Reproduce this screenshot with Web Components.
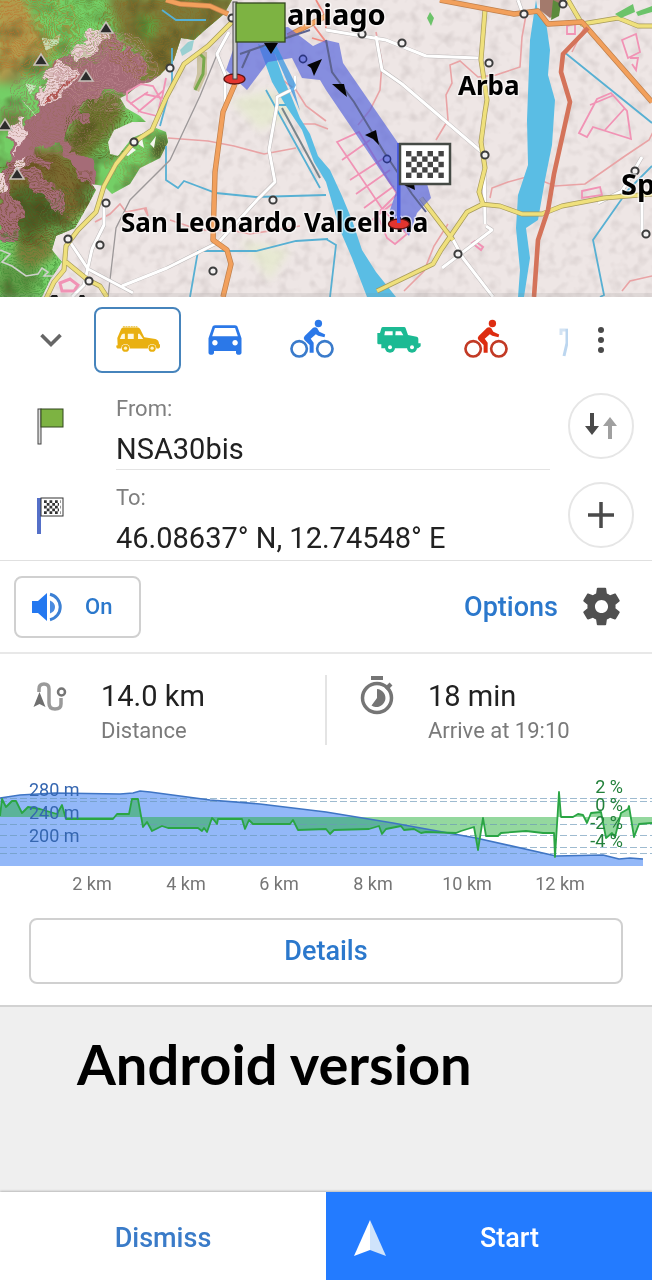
<!DOCTYPE html>
<html lang="en">
<head>
<meta charset="utf-8">
<meta name="viewport" content="width=device-width, initial-scale=1">
<title>Route details</title>
<style>
  body { margin: 0; background: #efefef; font-family: Roboto, sans-serif; color: #212121; }
</style>
</head>
<body>
<route-page></route-page>

<template id="map-view">
  <style>
    :host { display: block; overflow: hidden; background: #eee6e5; }
    svg { display: block; width: 100%; height: auto; }
    text { font: 700 26px "Noto Sans", sans-serif; fill: #000; stroke: #fff; stroke-opacity: .6; stroke-width: 3px; paint-order: stroke; stroke-linejoin: round; }
    .town { font-size: 29px; }
    filter { color-interpolation-filters: sRGB; }
  </style>
  <svg viewBox="0 0 652 297" role="img" aria-label="Map with the planned route">
    <defs>
      <filter id="rough" x="-5%" y="-5%" width="110%" height="110%">
        <feTurbulence type="fractalNoise" baseFrequency=".06" numOctaves="3" seed="4"/>
        <feDisplacementMap in="SourceGraphic" scale="22" xChannelSelector="R" yChannelSelector="G"/>
      </filter>
      <filter id="shade" x="0" y="0" width="100%" height="100%">
        <feTurbulence type="fractalNoise" baseFrequency=".04" numOctaves="3" seed="9"/>
        <feColorMatrix values="0 0 0 0 .25  0 0 0 0 .22  0 0 0 0 .08  3 0 0 0 -1.4"/>
      </filter>
      <filter id="grain" x="0" y="0" width="100%" height="100%">
        <feTurbulence type="fractalNoise" baseFrequency=".09" numOctaves="2" seed="2"/>
        <feColorMatrix values="0 0 0 0 .5  0 0 0 0 .45  0 0 0 0 .45  1.2 0 0 0 -.55"/>
      </filter>
      <filter id="soft"><feGaussianBlur stdDeviation="4"/></filter>
      <clipPath id="land"><path d="M0 0H232L224 14 205 30 194 40 181 38 174 60 160 75 150 82 140 84 128 94 120 98 126 108 140 116 146 122 132 122 114 130 108 142 110 154 118 156 132 138 156 128 166 132 168 142 160 158 140 168 130 184 112 194 104 186 92 184 86 176 96 190 88 205 75 228 56 236 52 250 62 262 50 280 42 297H0Z"/></clipPath>
    </defs>
    <rect width="652" height="297" fill="#eee6e5"/>
    <rect width="652" height="297" filter="url(#grain)" opacity=".35"/>
    <path d="M230 100l40-10 30 20-40 20zM240 240l50 10-20 30z" fill="#e2ebc6" opacity=".6" filter="url(#soft)"/>
    <g clip-path="url(#land)">
      <rect width="240" height="297" fill="#74cf66"/>
      <g filter="url(#soft)">
        <path d="M-5 -5H22L38 30 58 48 40 62 24 58 22 78 -5 84Z" fill="#b39a4c"/>
        <path d="M0 84L20 62 30 50 50 56 40 66 30 62 20 84Z" fill="#8a8d4a"/>
        <path d="M106 -5H240L232 20 192 40 170 78 140 84 146 56 122 44 116 24Z" fill="#7d7a38"/>
        <path d="M138 14L160 20 152 40 140 36Z" fill="#5da23f"/>
        <path d="M90 92H124L122 120 95 150 84 165 100 182 84 190 62 150 72 122Z" fill="#6d752f"/>
        <path d="M0 190L24 146 60 150 84 190 86 210 66 226 0 225Z" fill="#7a6a30"/>
        <path d="M10 190L50 180 64 220 30 240 4 226Z" fill="#4c6a2a"/>
        <path d="M0 110L30 112 14 132 0 130Z" fill="#66843c"/>
        <path d="M18 236L52 232 54 256 30 270 14 258Z" fill="#7d7c3a"/>
        <path d="M0 262L40 268 34 297H0Z" fill="#5f9a46"/>
        <path d="M150 150L168 130 170 145 152 166Z" fill="#566c34"/>
      </g>
      <rect width="240" height="297" filter="url(#shade)" opacity=".42"/>
      <g filter="url(#rough)">
        <path d="M106 30L118 36 122 48 136 52 148 60 144 76 154 82 128 94 98 96 84 106 86 124 72 126 62 138 76 152 92 172 96 190 84 182 72 160 56 144 34 152 54 164 48 168 26 162 44 176 62 196 66 216 40 196 26 178 10 180 18 210 24 228 12 242 0 240 0 190 10 156 8 140 24 124 36 112 34 102 50 82 52 64 78 50 94 40 98 28Z" fill="#a56c77"/>
        <path d="M96 26l14 8-8 14-22 8-4-8zM56 62l22 6-4 14-30 26-8-4zM8 126l14-8 2 20-10 14-4-14zM14 160l14-8 2 10-16 14zM0 176l8 0-2 16-6 4z" fill="#ecd3d6"/>
        <path d="M72 78L44 104" stroke="#b5504e" stroke-width="2"/>
      </g>
      <path d="M42 38l10 2 8-6-2 10-12 6zM26 84l10 2-6 8zM22 100l14 16" fill="#d9f0d2" stroke="#d9f0d2" opacity=".75"/>
      <g id="contours" filter="url(#rough)" fill="none" stroke-width="1"></g>
      <path d="M122 154l8-8 6 4-8 6zM138 144l4-6 2 10zM150 144l6-8-2 12z" fill="#f4f6ee"/>
      <path d="M0 250l10 4-8 8 10 4 14 10 12-2 4-6 6 4-4 4 14 0" fill="none" stroke="#d0d0cc" stroke-width="1.600"/>
    </g>
    <path d="M197 52l10 0 0 22-8 18-6-4 4-14z" fill="#b3a76c" opacity=".55"/>
    <path d="M198 52l6 6-1 16-8 16" fill="none" stroke="#79a94c" stroke-width="3"/>
    <path d="M180 50l8-8 6-2-2 10-10 6z" fill="#63c1c4" opacity=".6"/>

    <g fill="none" stroke="#e9a3a5" stroke-width="1.6">
      <path d="M168 138l40 3 26 5 30 8 32-6M276 75l20 15 10 16 20 15M95 222l15-8 10-10 6 8 20-4 2 8-4-8M170 220l30 10 30 0 20 4 50-8"/>
      <path d="M300 124l15 0 13 5M376 32l6 30-2 28-10 20-12 15M436 140l12-20-2-25 6-12-2-18 10-4 18 16 18-2 24-8 2-30 4-22M490 198l2-10 16-6 22-6 25 10 30-2 40-28 24-16 12-24M404 291l20-20 10-25 14-22"/>
      <path d="M572 52l12-24-6-14M622 291l8-10 22-5"/>
    </g>
    <g fill="none" stroke="#f193b5" stroke-width="1.8">
      <path d="M127 92l14-8 12 2 8 14-4 16-16-4-14-12zM130 104l18-12M138 112l26-22M166 78l-4 20-18-4"/>
      <path d="M337 142l22-10 38 62-20 20 10 24 8 6 12-10-24-24zM342 160l28-20M350 180l34-22M356 194l34-24M364 208l30-22M372 220l20-16"/>
      <path d="M579 133l18-34 14-6 16 18 4 28-38-12-6 10zM590 105l24-10M605 130l20-22"/>
      <path d="M622 40l14-6 4 18-12 6zM630 58l8 0-2 12-4-6M567 26l8-2v10h-8zM582 191l18-4 2 8-20 3z"/>
      <path d="M60 283l10-4 8 6-4 6-12 0z" stroke-width="3"/>
      <path d="M472 243l3-2 8 6-2 3z" stroke-width="2"/>
      <path d="M312 38l14 4-12-16M316 0l8 14 2 14" stroke="#f08a80"/>
    </g>
    <path d="M258 44L274 52 284 80 292 98 300 118 310 134 318 156 330 170 342 196 352 220 362 250 376 272 396 297H367L352 258 340 230 326 182 314 162 302 130 286 106 272 82 264 60Z" fill="#5abde4"/>
    <path d="M536 0L538 12 546 22 550 50 548 75 555 100 552 145 545 180 538 220 526 228 530 258 524 297H518L520 270 516 228 518 195 528 165 527 120 530 40Z" fill="#5abde4"/>
    <g fill="none" stroke="#57b0d3" stroke-width="1.8">
      <path d="M172 48l0 34-12 44M166 146l0 34 12 8 6-7 32 12 40 4 70-2M190 297l8-46 58 0 40-10 32-2M326 239l10 6-6 52M266 90l54 98M278 105h8M564 52l88 71M652 166l-24 24-35 50 11 55-4 2M162 10l14 10 30 0"/>
    </g>
    <path d="M282 108l38 70" stroke="#77858c" stroke-width="2"/>
    <path d="M218 52l-18 44-30 64-40 40-14 28-8 69" fill="none" stroke="#9c9899" stroke-width="1.3"/>
    <g fill="none" stroke-linejoin="round">
      <path d="M229 32l-12 22 8 20 0 30M277 105v-8l18-9 0-12M277 105l-8 45 6 32-18 18-38 42-52 26-45 18M104 203l0 22-12 24-8 36-12 12M68 239l20 30 45 24M326 30l60 10 40 16 52 2M376 36l6 34 20 14 82 70 1 70M486 226l6 4-50 38M451 236l12 22 30 39M518 0l5 14M642 157l-20 34-24 12M642 232l0-30" stroke="#bdb9b9" stroke-width="4"/>
      <path d="M229 32l-12 22 8 20 0 30M277 105v-8l18-9 0-12M277 105l-8 45 6 32-18 18-38 42-52 26-45 18M104 203l0 22-12 24-8 36-12 12M68 239l20 30 45 24M326 30l60 10 40 16 52 2M376 36l6 34 20 14 82 70 1 70M486 226l6 4-50 38M451 236l12 22 30 39M518 0l5 14M642 157l-20 34-24 12M642 232l0-30" stroke="#fff" stroke-width="3"/>
      <path d="M232 22l-24 24-24 18-18 34-14 32-18 12-18 22-12 22-8 26-18 18-12 16-2 24-10 12-12 25M66 262l22 18 12 6 7 11M485 10l-4 50 6 40-2 12-4 30 4 26-6 24 4 12-16 8-26 38-8 14-56 27M421 198l32 42M480 204l20 2 22 8 20 0 20-8 42-8 48-4M568 0l14 24 36-6 20 8 14 0" stroke="#a79a5a" stroke-width="5"/>
      <path d="M232 22l-24 24-24 18-18 34-14 32-18 12-18 22-12 22-8 26-18 18-12 16-2 24-10 12-12 25M66 262l22 18 12 6 7 11M485 10l-4 50 6 40-2 12-4 30 4 26-6 24 4 12-16 8-26 38-8 14-56 27M421 198l32 42M480 204l20 2 22 8 20 0 20-8 42-8 48-4M568 0l14 24 36-6 20 8 14 0" stroke="#efe07c" stroke-width="3.6"/>
      <path d="M235 84l-12 28-8 60-2 68 14 10 4 14-8 33M166 0l14 4 30 2 18 8M440 0l74 14 24-3 10 13 34-2 70 80M288 36l38-20" stroke="#bf7f4b" stroke-width="5.4"/>
      <path d="M235 84l-12 28-8 60-2 68 14 10 4 14-8 33M166 0l14 4 30 2 18 8M440 0l74 14 24-3 10 13 34-2 70 80M288 36l38-20" stroke="#f2a05c" stroke-width="4"/>
      <path d="M588 28l-25 26-2 18 9 30-16 72-6 36-10 30-4 57" stroke="#d4735a" stroke-width="4.6"/>
    </g>
    <path d="M430 12l4 6-3 8-4-8zM615 14l18-10 2 8-14 6zM636 12l16-6v6l-14 4z" fill="#6cc36a"/>
    <path d="M540 0h22l-4 12-8 6-10-8z" fill="#a37a6c"/>
    <path d="M553 0l8 4-2 12-8 4z" fill="#5c8a3c"/>

    <path d="M226 70L240 30 288 27 313 46 326 40 339 43 343 63 398 143 426 180 431 198 417 213 409 236 389 213 396 192 389 183 326 90 320 80 302 78 292 58 268 62 247 90Z" fill="#5060dc" opacity=".66"/>
    <path d="M250 50l-8 18M240 54l40-14 30-10M326 40l6 32 22 30 30 50 28 42 14 18" fill="none" stroke="#5c6390" stroke-width="2"/>
    <path d="M263 46l12 8 3 7 22 50-6-22 2-4-20-40z" fill="#2b8fe0" opacity=".7"/>

    <g fill="#f4f2f2" stroke="#3c3c3c" stroke-width="2">
      <circle cx="170" cy="68" r="3.6"/><circle cx="134" cy="142" r="3.6"/><circle cx="106" cy="203" r="3.6"/><circle cx="68" cy="239" r="3.6"/><circle cx="100" cy="245" r="3.6"/><circle cx="89" cy="281" r="3.6"/><circle cx="213" cy="271" r="3.6"/><circle cx="273" cy="200" r="3.6"/><circle cx="232" cy="18" r="3.6"/>
      <circle cx="362" cy="34" r="3.6"/><circle cx="402" cy="43" r="3.6"/><circle cx="489" cy="63" r="3.6"/><circle cx="524" cy="14" r="3.6"/><circle cx="563" cy="4" r="3.6"/><circle cx="485" cy="155" r="3.6"/><circle cx="458" cy="254" r="3.6"/><circle cx="635" cy="171" r="3.6"/><circle cx="646" cy="234" r="3.6"/>
    </g>
    <g fill="#7680e0" stroke="#2b3580" stroke-width="1.6"><circle cx="303" cy="59" r="3.6"/><circle cx="387" cy="159" r="3.6"/></g>
    <g fill="#2c2c2c" stroke="#c9c1bb" stroke-width="1.500">
      <path d="M106 22l7 11H99zM41 54l7 11H34zM86 70l7 11H79zM5 119l7 11H-2zM17 168l7 11H10z"/>
    </g>
    <path d="M322 59l-15 6 4 3 3 8zM332 84l12 0 3 13-6-5zM365 135l11-5 3 15-6-6zM264 43l14 0-7 11zM402 184l12 0 1 6z" fill="#050505"/>
    <text class="town" x="287" y="25">aniago</text>
    <text x="458" y="95">Arba</text>
    <text class="town" x="621" y="195">Sp</text>
    <text x="121" y="232">San Leonardo Valcellina</text>
    <path d="M50 297l2-2h5l1 2zM79 297l1-2h4l1 2z" fill="#111"/>
    <ellipse cx="234.500" cy="79" rx="10.500" ry="5" fill="#e3342f" stroke="#5c1512" stroke-width="1.3"/>
    <ellipse cx="399" cy="224" rx="10.500" ry="5" fill="#e3342f" stroke="#5c1512" stroke-width="1.3"/>
    <rect x="233" y="2" width="4" height="77" fill="#ccc" stroke="#444" stroke-width="1"/>
    <rect x="236" y="3" width="49" height="39" fill="#7db342" stroke="#33471e" stroke-width="1.3"/>
    <rect x="397" y="143" width="3.500" height="80" fill="#4a5de0"/>
    <rect x="400" y="144" width="50" height="40" fill="#fff" stroke="#454a45" stroke-width="2.500"/>
    <g id="checks" fill="#444"></g>
    <rect y="293" width="652" height="4" fill="#777" opacity=".12"/>
  </svg>
</template>

<template id="mode-chip">
  <style>
    :host { display: block; flex: none; }
    button { box-sizing: border-box; width: 87px; height: 66px; padding: 0; border: 2px solid transparent; border-radius: 8px; background: none; display: grid; place-items: center; color: inherit; }
    :host([selected]) button { border-color: #4684bc; }
  </style>
  <button type="button"><slot></slot></button>
</template>

<template id="mode-bar">
  <style>
    :host { display: flex; align-items: center; padding: 10px 18px 9px 0; background: #fff; }
    .icon { border: 0; background: none; padding: 0; display: grid; place-items: center; flex: none; }
    .fold { width: 94px; height: 66px; padding-left: 8px; box-sizing: border-box; }
    .list { flex: 1; min-width: 0; display: flex; overflow: hidden; }
    .more { width: 66px; height: 66px; }
    svg { display: block; }
  </style>
  <button class="icon fold" type="button" aria-label="Collapse"><svg width="24" height="16" viewBox="0 0 24 16"><path d="M2.500 3L12 12.500 21.500 3" fill="none" stroke="#666" stroke-width="3.600"/></svg></button>
  <div class="list">
    <mode-chip selected>
      <svg width="44" height="28" viewBox="346 92 134 84" role="img" aria-label="Off-road car">
        <path d="M351 150L350 128 361 102Q363 96 368 96H413Q417 96 420 101L432 126 466 131Q477 134 477 146L480 148V156L476 160H350L347 156V151Z" fill="#e9b010"/>
        <path d="M367 94H411" stroke="#eecb5c" stroke-width="5" stroke-dasharray="6 2"/>
        <path d="M363 118L367 115H373V131H358ZM382 115H400V131H382ZM413 115H418L429 131H413Z" fill="#fff8e0"/>
        <circle cx="375" cy="159" r="13" fill="#fff"/><circle cx="375" cy="159" r="11" fill="#e9b010"/><circle cx="375" cy="159" r="5" fill="#fff3c4"/>
        <circle cx="456" cy="159" r="13" fill="#fff"/><circle cx="456" cy="159" r="11" fill="#e9b010"/><circle cx="456" cy="159" r="5" fill="#fff3c4"/>
      </svg>
    </mode-chip>
    <mode-chip>
      <svg width="44" height="44" viewBox="0 1 24 24" fill="#2b78e8" role="img" aria-label="Car"><path d="M18.920 6.010C18.720 5.420 18.160 5 17.500 5h-11c-.66 0-1.210.42-1.420 1.010L3 12v8c0 .55.45 1 1 1h1c.55 0 1-.45 1-1v-1h12v1c0 .55.45 1 1 1h1c.55 0 1-.45 1-1v-8l-2.080-5.990zM6.500 16c-.83 0-1.500-.67-1.500-1.500S5.670 13 6.500 13s1.500.67 1.500 1.500S7.330 16 6.500 16zm11 0c-.83 0-1.500-.67-1.500-1.500s.67-1.500 1.500-1.500 1.500.67 1.500 1.500-.67 1.500-1.500 1.500zM5 11l1.500-4.500h11L19 11H5z"/></svg>
    </mode-chip>
    <mode-chip><bike-icon style="--body:#2b78e8;--wheel:#3a7bcb"></bike-icon></mode-chip>
    <mode-chip>
      <svg width="44" height="28" viewBox="151 91 132 84" role="img" aria-label="Jeep">
        <path d="M152 112H160L164 98Q165 94 169 94H232Q236 94 237 98L244 118 270 123Q275 124 275 129V143H282V152L274 158H164V146H156Q152 146 152 142Z" fill="#1cba93"/>
        <path d="M175 107H198V119H173ZM207 107H223L230 119H206Z" fill="#fff"/>
        <circle cx="190" cy="156" r="15" fill="#1cba93"/><circle cx="190" cy="155" r="6" fill="#fff"/>
        <circle cx="256" cy="156" r="15" fill="#1cba93"/><circle cx="256" cy="155" r="6" fill="#fff"/>
      </svg>
    </mode-chip>
    <mode-chip><bike-icon style="--body:#dd2c10;--wheel:#c23a25"></bike-icon></mode-chip>
    <mode-chip>
      <svg width="44" height="44" viewBox="0 0 44 44" fill="none" stroke-width="3" role="img" aria-label="Walking"><path d="M10 17V12H18" stroke="#d3e3f3"/><path d="M16 11V25L13 38" stroke="#bcd6ef"/></svg>
    </mode-chip>
  </div>
  <button class="icon more" type="button" aria-label="More"><svg width="8" height="28" viewBox="0 0 8 28" fill="#4a4a4a"><circle cx="4" cy="4" r="3"/><circle cx="4" cy="14" r="3"/><circle cx="4" cy="24" r="3"/></svg></button>
</template>

<template id="bike-icon">
  <style>:host { display: block; } svg { display: block; }</style>
  <svg width="44" height="44" viewBox="0 0 24 24" role="img" aria-label="Bicycle">
    <circle cx="15.500" cy="3" r="2" fill="var(--body)"/>
    <path d="M12.600 5.300Q13.700 4.700 14.800 5.400L16 7.500 19.200 9 18.800 10.500 15.400 9.700 14.100 8.800 11.300 11.300 12.900 13.500V18.900H10.700V14.700L7.900 12Q7 10.900 8 9.800Z" fill="var(--body)"/>
    <g fill="none" stroke="var(--wheel)" stroke-width="1.450"><circle cx="5" cy="16.800" r="4.200"/><circle cx="19" cy="16.800" r="4.200"/></g>
  </svg>
</template>

<template id="route-point">
  <style>
    :host { display: grid; grid-template-columns: 116px 1fr 102px; height: 88px; background: #fff; border-bottom: 1px solid #fff; }
    .flag { padding: 26px 0 0 37px; }
    .text { border-bottom: 1px solid var(--line, #e3e3e3); padding-top: 13px; white-space: nowrap; }
    .label { font-size: 22px; line-height: 28px; color: #7f7f7f; }
    .value { font-size: 29px; line-height: 52px; height: 46px; color: #212121; }
    .action { display: grid; justify-items: end; align-items: center; padding-right: 18px; }
    button { box-sizing: border-box; width: 66px; height: 66px; padding: 0; border: 2px solid #e6e6e6; border-radius: 50%; background: #fff; display: grid; place-items: center; }
  </style>
  <div class="flag"><slot name="flag"></slot></div>
  <div class="text">
    <div class="label"><slot name="label"></slot></div>
    <div class="value"><slot></slot></div>
  </div>
  <div class="action"><button type="button"><slot name="action"></slot></button></div>
</template>

<template id="voice-row">
  <style>
    :host { display: flex; justify-content: space-between; align-items: center; height: 91px; padding: 0 28px 0 14px; background: #fff; border-top: 1px solid #e0e0e0; border-bottom: 2px solid #e8e8e8; }
    button { font: 500 27px Roboto, sans-serif; color: #2b78cc; background: #fff; border: 0; padding: 0; display: flex; align-items: center; }
    .voice { box-sizing: border-box; width: 127px; height: 62px; border: 2px solid #d0d0d0; border-radius: 8px; padding-left: 15px; gap: 22px; font-size: 22px; }
    .options { gap: 21px; }
    svg { display: block; }
  </style>
  <button class="voice" type="button">
    <svg width="32" height="32" viewBox="0 0 32 32" fill="#2478f0"><path d="M1 10H7L16 2V30L7 22H1Z"/><path d="M19 9.500Q24 11.500 24 16T19 22.500Z" fill="#4a8be0"/><path d="M19 3.300A13 13 0 0 1 19 28.700" fill="none" stroke="#3c80d4" stroke-width="3"/></svg>
    <span>On</span>
  </button>
  <button class="options" type="button">
    <span>Options</span>
    <svg width="45" height="45" viewBox="0 0 24 24" fill="#505050"><path d="M19.430 12.980c.04-.32.07-.64.07-.98s-.03-.66-.07-.98l2.110-1.650c.19-.15.24-.42.12-.64l-2-3.460c-.12-.22-.39-.3-.61-.22l-2.490 1c-.52-.4-1.080-.73-1.690-.98l-.38-2.650C14.460 2.180 14.250 2 14 2h-4c-.25 0-.46.18-.49.42l-.38 2.650c-.61.25-1.170.59-1.690.98l-2.490-1c-.23-.09-.49 0-.61.22l-2 3.460c-.13.22-.07.49.12.64l2.110 1.650c-.04.32-.07.65-.07.98s.03.66.07.98l-2.110 1.650c-.19.15-.24.42-.12.64l2 3.460c.12.22.39.3.61.22l2.490-1c.52.4 1.080.73 1.690.98l.38 2.650c.03.24.24.42.49.42h4c.25 0 .46-.18.49-.42l.38-2.650c.61-.25 1.170-.59 1.690-.98l2.490 1c.23.09.49 0 .61-.22l2-3.460c.12-.22.07-.49-.12-.64l-2.110-1.650zM12 15.500c-1.930 0-3.500-1.570-3.500-3.500s1.570-3.500 3.500-3.500 3.500 1.570 3.500 3.500-1.570 3.500-3.500 3.500z"/></svg>
  </button>
</template>

<template id="trip-stat">
  <style>
    :host { display: grid; grid-template-columns: 69px 1fr; flex: 1; box-sizing: border-box; padding-left: 32px; height: 70px; }
    .big { font-size: 29px; line-height: 42px; color: #212121; white-space: nowrap; }
    .small { font-size: 22px; line-height: 28px; color: #7a7a7a; white-space: nowrap; }
  </style>
  <slot name="icon"></slot>
  <div><div class="big"><slot></slot></div><div class="small"><slot name="note"></slot></div></div>
</template>

<template id="elevation-chart">
  <style>
    :host { display: block; background: #fff; }
    svg { display: block; width: 100%; height: auto; }
    text { font: 18px Roboto, sans-serif; }
  </style>
  <svg viewBox="0 770 652 134" role="img" aria-label="Elevation and slope along the route">
    <path d="M0 798L20 795 55 793 120 794 133 793 140 791 150 792 210 800 260 804 326 812 393 823 476 838 556 856 603 855 619 859 630 858 643 859V866H0Z" fill="#93b8f8"/>
    <path id="fill" fill="#1fae34" opacity=".48"/>
    <path d="M0 798.500H652M0 801.500H652M0 824.500H652M0 835.500H652M0 847.500H652M0 853.500H652" stroke="#6b98b8" stroke-width="1" stroke-dasharray="7 3" opacity=".65"/>
    <path d="M0 798L20 795 55 793 120 794 133 793 140 791 150 792 210 800 260 804 326 812 393 823 476 838 556 856 603 855 619 859 630 858 643 859" fill="none" stroke="#3f75c4" stroke-width="1.700"/>
    <path id="line" fill="none" stroke="#2aa544" stroke-width="1.800" stroke-linejoin="round"/>
    <g fill="#3566b0"><text x="29" y="796">280 m</text><text x="29" y="819">240 m</text><text x="29" y="842">200 m</text></g>
    <g fill="#22803a" text-anchor="end"><text x="623" y="793">2 %</text><text x="623" y="811">0 %</text><text x="623" y="829">-2 %</text><text x="623" y="847">-4 %</text></g>
    <g fill="#757575" text-anchor="middle"><text x="92" y="890">2 km</text><text x="186" y="890">4 km</text><text x="279" y="890">6 km</text><text x="373" y="890">8 km</text><text x="467" y="890">10 km</text><text x="560" y="890">12 km</text></g>
  </svg>
</template>

<template id="action-bar">
  <style>
    :host { display: grid; grid-template-columns: 1fr 1fr; height: 88px; box-shadow: 0 -1px 2px #b8b8b8; }
    button { border: 0; padding: 3px 0 0; font: 500 27px Roboto, sans-serif; background: #fff; color: #3a7bc8; }
    .start { background: #237bff; color: #fff; display: flex; align-items: center; padding-left: 27px; }
    .start span { flex: 1; text-align: center; padding-right: 20px; }
  </style>
  <button type="button">Dismiss</button>
  <button class="start" type="button">
    <svg width="34" height="38" viewBox="0 0 34 38"><path d="M17 1L33 37 17 31Z" fill="#cfe3fb"/><path d="M17 1L1 37 17 31Z" fill="#fff"/></svg>
    <span>Start</span>
  </button>
</template>

<template id="route-page">
  <style>
    :host { display: flex; flex-direction: column; min-height: 100vh; }
    .stats { display: flex; background: #fff; padding: 21px 0 25px; }
    .stats trip-stat + trip-stat { border-left: 2px solid #e4e4e4; }
    .details { display: flex; background: #fff; padding: 14px 29px 21px; border-bottom: 2px solid #d2d2d2; }
    .details button { flex: 1; height: 66px; border: 2px solid #d0d0d0; border-radius: 8px; background: #fff; font: 500 27px Roboto, sans-serif; color: #2b78cc; }
    .note { flex: 1; padding: 23px 77px; background: #efefef; }
    h1 { margin: 0; font: 700 56px/68px Lato, sans-serif; color: #000; white-space: nowrap; }
    svg { display: block; }
  </style>
  <map-view></map-view>
  <mode-bar></mode-bar>
  <route-point>
    <svg slot="flag" width="28" height="38" viewBox="0 0 28 38"><rect x="1" y="1" width="3" height="35" fill="#ddd" stroke="#444"/><rect x="4" y="1" width="22" height="18" fill="#7db342" stroke="#33471e"/></svg>
    <span slot="label">From:</span>NSA30bis
    <svg slot="action" width="34" height="30" viewBox="0 0 34 30"><path d="M6 2H10V15H15L8 24 1 15H6Z" fill="#4a4a4a"/><path d="M24 28H28V15H33L26 6 19 15H24Z" fill="#a0a0a0"/></svg>
  </route-point>
  <route-point style="--line:transparent">
    <svg slot="flag" width="28" height="38" viewBox="0 0 28 38"><rect x="0" y="1" width="4" height="36" fill="#5570c8"/><rect x="4" y="1" width="22" height="18" fill="#fff" stroke="#333"/><path d="M7 4.500H24M7 10H24M7 15.500H24" stroke="#333" stroke-width="2.750" stroke-dasharray="2.750 2.750"/><path d="M9.750 7.250H22M9.750 12.750H22" stroke="#333" stroke-width="2.750" stroke-dasharray="2.750 2.750"/></svg>
    <span slot="label">To:</span>46.08637° N, 12.74548° E
    <svg slot="action" width="28" height="28" viewBox="0 0 28 28"><path d="M14 1V27M1 14H27" stroke="#4a4a4a" stroke-width="3.500"/></svg>
  </route-point>
  <voice-row></voice-row>
  <div class="stats">
    <trip-stat>
      <svg slot="icon" width="36" height="42" viewBox="0 0 36 42"><g fill="none" stroke="#9a9a9a" stroke-width="3.500"><path d="M7 17V14Q7 9 12 9T17 14V28Q17 34 23 34T29 29V23"/></g><circle cx="29.500" cy="17" r="3.500" fill="none" stroke="#757575" stroke-width="2.500"/><path d="M7.500 17L13.500 32 7.500 29 1.500 32Z" fill="#6f6f6f"/></svg>
      14.0 km<span slot="note">Distance</span>
    </trip-stat>
    <trip-stat>
      <svg slot="icon" width="36" height="42" viewBox="0 0 36 42"><circle cx="18" cy="23" r="14.500" fill="none" stroke="#757575" stroke-width="3.500"/><rect x="12" y="1" width="12" height="4" fill="#757575"/><path d="M27 14L32 9" stroke="#757575" stroke-width="4"/><path d="M18 14A9 9 0 1 1 12.500 30.500L18 23Z" fill="#757575"/></svg>
      18 min<span slot="note">Arrive at 19:10</span>
    </trip-stat>
  </div>
  <elevation-chart></elevation-chart>
  <div class="details"><button type="button">Details</button></div>
  <div class="note"><h1>Android version</h1></div>
  <action-bar></action-bar>
</template>

<script>
  const NS = 'http://www.w3.org/2000/svg';
  const make = (parent, tag, attrs) => {
    const el = document.createElementNS(NS, tag);
    for (const k in attrs) el.setAttribute(k, attrs[k]);
    parent.append(el);
  };

  class Base extends HTMLElement {
    constructor() {
      super();
      const t = document.getElementById(this.localName);
      this.attachShadow({ mode: 'open' }).append(t.content.cloneNode(true));
    }
  }

  class MapView extends Base {
    constructor() {
      super();
      const contours = this.shadowRoot.getElementById('contours');
      const hills = [[20, 30, 60, '#c0702c'], [80, 30, 46, '#6f9a3a'], [60, 110, 60, '#9a6a5c'], [160, 30, 64, '#8a6a24'], [105, 70, 50, '#c08a92'], [100, 130, 40, '#5c5a1c'], [40, 200, 60, '#6a4a1c'], [75, 215, 36, '#4c7430'], [20, 270, 50, '#3f8a34'], [140, 155, 40, '#8a9a4a']];
      for (const [cx, cy, r, stroke] of hills)
        for (let i = 4; i < r; i += 4) make(contours, 'ellipse', { cx, cy, rx: i, ry: i * 0.8, stroke, opacity: 0.6 });
      const checks = this.shadowRoot.getElementById('checks');
      for (let row = 0; row < 5; row++)
        for (let col = 0; col < 7; col++)
          if ((row + col) % 2 === 0) make(checks, 'rect', { x: 406 + col * 5.4, y: 151 + row * 5.4, width: 5.4, height: 5.4 });
    }
  }

  class ElevationChart extends Base {
    constructor() {
      super();
      const slope = [[0,816],[2,799],[6,807],[12,801],[16,801],[22,813],[28,807],[40,809],[50,812],[57,814],[62,805],[66,819],[113,819],[117,814],[129,814],[132,799],[138,799],[143,827],[147,822],[152,831],[162,826],[168,828],[198,828],[202,831],[204,828],[207,832],[212,818],[214,820],[217,824],[218,819],[242,819],[245,829],[249,820],[253,824],[290,824],[293,820],[298,830],[326,829],[330,834],[334,830],[369,829],[379,826],[382,834],[386,829],[401,826],[404,830],[414,829],[421,833],[426,832],[456,833],[461,831],[474,827],[478,850],[483,818],[486,836],[498,836],[501,833],[526,831],[543,833],[554,833],[555,857],[559,792],[561,817],[573,817],[578,814],[583,815],[587,823],[591,813],[601,812],[606,838],[612,833],[615,837],[621,813],[628,809],[629,806],[634,837],[639,824],[652,823]];
      const d = 'M' + slope.map(p => p.join(' ')).join('L');
      this.shadowRoot.getElementById('line').setAttribute('d', d);
      this.shadowRoot.getElementById('fill').setAttribute('d', d + 'V817H0Z');
    }
  }

  customElements.define('map-view', MapView);
  customElements.define('elevation-chart', ElevationChart);
  for (const name of ['bike-icon', 'mode-chip', 'mode-bar', 'route-point', 'voice-row', 'trip-stat', 'action-bar', 'route-page'])
    customElements.define(name, class extends Base {});
</script>
</body>
</html>
